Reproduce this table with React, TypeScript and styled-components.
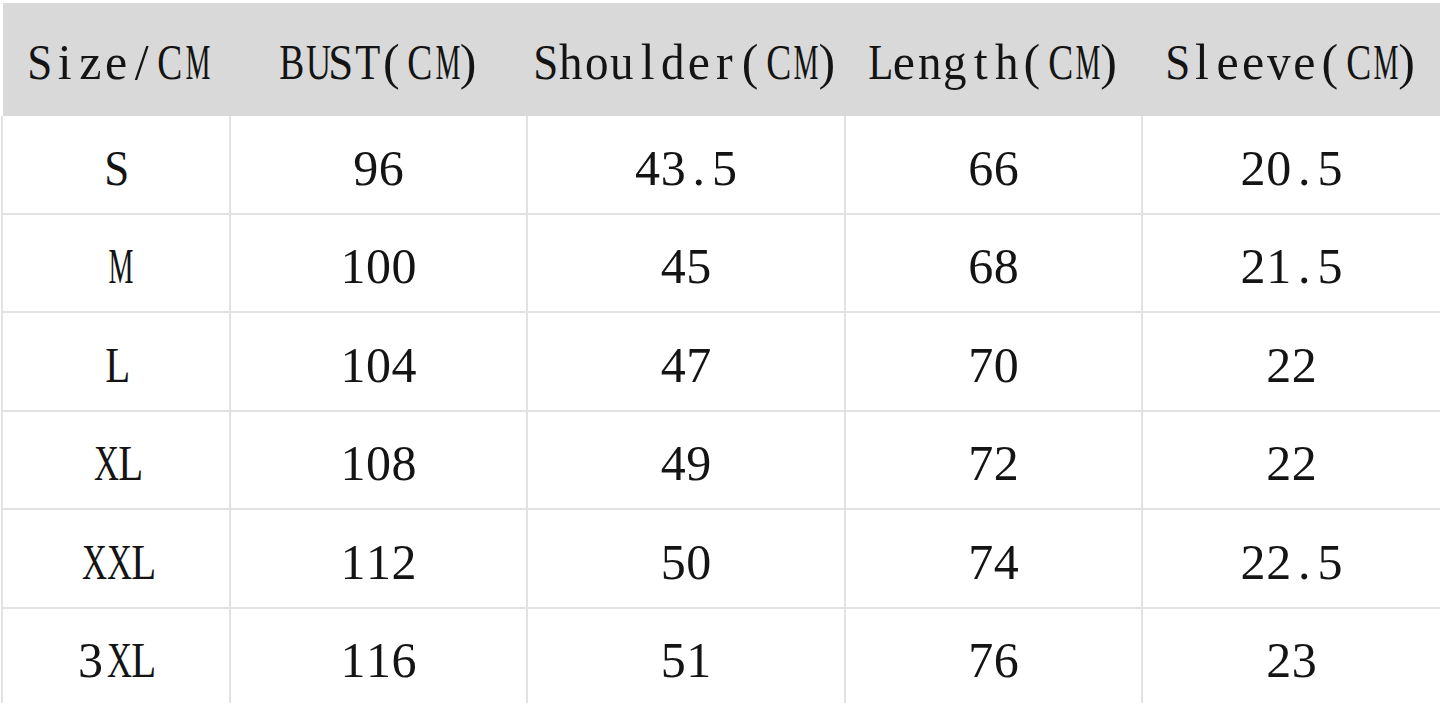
import React from "react";
import styled, { createGlobalStyle } from "styled-components";

const Global = createGlobalStyle`
  html, body { margin: 0; padding: 0; background: #ffffff; }
  body { font-family: "Liberation Serif", "Times New Roman", serif; color: #141414; }
`;

const Page = styled.div`
  width: 1440px;
  height: 703px;
  padding: 3px 0 0 1px;
  box-sizing: border-box;
  overflow: hidden;
  background: #ffffff;
`;

const cols = "226px 295px 316px 295px 1fr";

const HeaderRow = styled.div`
  display: grid;
  grid-template-columns: ${cols};
  column-gap: 2px;
  margin-left: 2px;
  height: 113px;
  background: #d9d9d9;
`;

const HeadCell = styled.div`
  display: flex;
  align-items: center;
  justify-content: center;
  font-size: 50px;
  white-space: nowrap;
  padding-top: 4px;
  box-sizing: border-box;
`;

const Body = styled.div`
  display: grid;
  grid-template-columns: ${cols};
  grid-auto-rows: 96.5px;
  gap: 2px;
  background: #e2e2e2;
  border-left: 2px solid #e2e2e2;
`;

const Cell = styled.div`
  display: flex;
  align-items: center;
  justify-content: center;
  background: #ffffff;
  font-size: 50px;
  padding-top: 7px;
  box-sizing: border-box;
  white-space: nowrap;
`;

const Glyph = styled.span`
  display: inline-block;
  width: 25.6px;
  text-align: center;
  transform-origin: 50% 50%;
`;

/* Advance widths (em) of Liberation Serif, used to fit each glyph into a half-width cell */
const widths: Record<string, number> = {
  A: 0.722, B: 0.667, C: 0.667, D: 0.722, E: 0.611, F: 0.556, G: 0.722, H: 0.722,
  I: 0.333, K: 0.722, L: 0.611, M: 0.889, N: 0.722, O: 0.722, P: 0.556, R: 0.667,
  S: 0.556, T: 0.611, U: 0.722, V: 0.722, W: 0.944, X: 0.722, Y: 0.722, Z: 0.611,
  a: 0.444, b: 0.5, c: 0.444, d: 0.5, e: 0.444, g: 0.5, h: 0.5, i: 0.278, l: 0.278,
  m: 0.778, n: 0.5, o: 0.5, r: 0.333, s: 0.389, t: 0.278, u: 0.5, v: 0.5, z: 0.444,
};

function Mono({ text }: { text: string }) {
  return (
    <>
      {Array.from(text).map((ch, i) => {
        const w = widths[ch] ?? 0.45;
        const isUpper = ch >= "A" && ch <= "Z";
        const limit = isUpper ? 0.5 : 0.47;
        const k = w > limit ? limit / w : 1;
        return (
          <Glyph key={i} style={k < 1 ? { transform: `scaleX(${k.toFixed(3)})` } : undefined}>
            {ch}
          </Glyph>
        );
      })}
    </>
  );
}

const headers = ["Size/CM", "BUST(CM)", "Shoulder(CM)", "Length(CM)", "Sleeve(CM)"];
const rows = [
  ["S", "96", "43.5", "66", "20.5"],
  ["M", "100", "45", "68", "21.5"],
  ["L", "104", "47", "70", "22"],
  ["XL", "108", "49", "72", "22"],
  ["XXL", "112", "50", "74", "22.5"],
  ["3XL", "116", "51", "76", "23"],
];

export default function App() {
  return (
    <>
      <Global />
      <Page>
        <HeaderRow>
          {headers.map((h) => (
            <HeadCell key={h}>
              <Mono text={h} />
            </HeadCell>
          ))}
        </HeaderRow>
        <Body>
          {rows.map((r, i) =>
            r.map((v, j) => (
              <Cell key={`${i}-${j}`}>
                <Mono text={v} />
              </Cell>
            ))
          )}
        </Body>
      </Page>
    </>
  );
}
